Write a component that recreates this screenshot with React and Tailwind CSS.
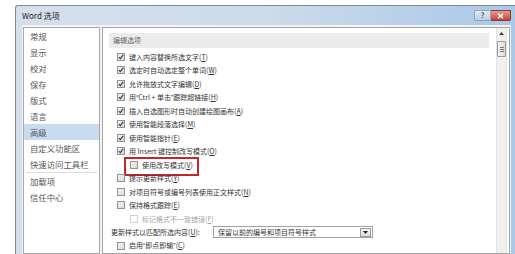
import React from "react";

const FONT = { fontFamily: '"Noto Sans CJK SC", "Noto Sans", sans-serif' };

const NAV = [
  "常规",
  "显示",
  "校对",
  "保存",
  "版式",
  "语言",
  "高级",
  "自定义功能区",
  "快速访问工具栏",
  "加载项",
  "信任中心",
];

// quotes set in a Latin face so they stay narrow like in the dialog
const Q = ({ children }) => <span style={{ fontFamily: '"Liberation Sans", sans-serif' }}>{children}</span>;

const ROWS = [
  { text: "键入内容替换所选文字", key: "T", checked: true },
  { text: "选定时自动选定整个单词", key: "W", checked: true },
  { text: "允许拖放式文字编辑", key: "D", checked: true },
  {
    text: (
      <>
        用<Q>“</Q>Ctrl + 单击<Q>”</Q>跟踪超链接
      </>
    ),
    key: "H",
    checked: true,
  },
  { text: "插入自选图形时自动创建绘图画布", key: "A", checked: true },
  { text: "使用智能段落选择", key: "M", checked: true },
  { text: "使用智能指针", key: "E", checked: true },
  { text: "用 Insert 键控制改写模式", key: "O", checked: true },
  { text: "使用改写模式", key: "V", indent: true, marked: true },
  { text: "提示更新样式", key: "Y" },
  { text: "对项目符号或编号列表使用正文样式", key: "N" },
  { text: "保持格式跟踪", key: "E" },
  { text: "标记格式不一致错误", key: "F", indent: true, disabled: true },
  { select: true },
  {
    text: (
      <>
        启用<Q>“</Q>即点即输<Q>”</Q>
      </>
    ),
    key: "C",
  },
];

function Box({ checked, disabled }) {
  return (
    <span
      className={`flex h-[8px] w-[8px] shrink-0 items-center justify-center border ${
        disabled
          ? "border-[#cfcfcf] bg-white"
          : "border-[#939393] bg-linear-to-br from-[#f4f4f4] to-[#d9d9d9]"
      }`}
    >
      {checked && (
        <svg width="6" height="6" viewBox="0 0 6 6">
          <path d="M0.8 3.1 L2.3 4.7 L5.2 0.9" fill="none" stroke="#2b3a4a" strokeWidth="1.1" />
        </svg>
      )}
    </span>
  );
}

function Row({ row }) {
  if (row.select) {
    return (
      <div className="flex h-[13.5px] items-center pl-[8px] text-[7px] text-[#333]">
        <span className="w-[102px] whitespace-nowrap">
          更新样式以匹配所选内容(<u>U</u>):
        </span>
        <div className="flex h-[12px] w-[160px] items-center justify-between border border-[#a3a3a3] bg-white pl-[4px] pr-[1px]">
          <span>保留以前的编号和项目符号样式</span>
          <span className="flex h-[9px] w-[11px] items-center justify-center border border-[#9a9a9a] bg-linear-to-b from-[#f6f6f6] to-[#dedede]">
            <svg width="5" height="3" viewBox="0 0 5 3">
              <path d="M0 0 H5 L2.5 3 Z" fill="#222" />
            </svg>
          </span>
        </div>
      </div>
    );
  }
  return (
    <div
      className={`relative flex h-[13.5px] items-center gap-[4px] text-[7px] ${
        row.indent ? "pl-[27px]" : "pl-[14px]"
      } ${row.disabled ? "text-[#a5a5a5]" : "text-[#333]"}`}
    >
      <Box checked={row.checked} disabled={row.disabled} />
      <span className="whitespace-nowrap">
        {row.text}(<u>{row.key}</u>)
      </span>
      {row.marked && (
        <span className="absolute left-[21px] top-[-1px] h-[19px] w-[75px] border-2 border-[#c3272e]" />
      )}
    </div>
  );
}

export default function App() {
  return (
    <div className="h-[254px] w-[515px] overflow-hidden bg-white pl-[15px] pt-[5px]" style={FONT}>
      <div className="flex h-full flex-col rounded-tl-[3px] border-l border-t border-[#7d8a99] bg-linear-to-r from-[#d6e0ec] via-[#cddbea] to-[#aac8e8] pl-[6px] pr-[4px]">
        {/* title bar */}
        <div className="flex h-[19px] shrink-0 items-center justify-between">
          <span className="text-[8px] text-[#1e1e1e]">Word 选项</span>
          <div className="flex self-start pt-[4px]">
            <span className="flex h-[11px] w-[17px] items-center justify-center rounded-bl-[2px] border border-[#8ea4be] bg-linear-to-b from-[#e3ecf6] to-[#bccde2] text-[7px] font-bold leading-none text-[#3a4a5e]">
              ?
            </span>
            <span className="flex h-[11px] w-[20px] items-center justify-center rounded-br-[2px] border border-l-0 border-[#8a3a33] bg-linear-to-b from-[#e59a8f] to-[#c4443a]">
              <svg width="7" height="6" viewBox="0 0 7 6">
                <path d="M1 0.8 L6 5.2 M6 0.8 L1 5.2" stroke="#fff" strokeWidth="1.5" />
              </svg>
            </span>
          </div>
        </div>

        {/* client area */}
        <div className="flex flex-1 gap-[2px] bg-[#f2f4f6] pl-[1px] pr-[1px] pt-[2px]">
          {/* left nav */}
          <div className="w-[77px] shrink-0 border border-[#a8a8a8] bg-white">
            {NAV.map((item) => (
              <React.Fragment key={item}>
                {item === "加载项" && <div className="mx-[2px] h-px bg-[#dcdcdc]" />}
                <div
                  className={`flex h-[16px] items-center pl-[6px] text-[8.4px] text-[#555] ${
                    item === "高级" ? "bg-[#c9dbf1]" : ""
                  }`}
                >
                  {item}
                </div>
              </React.Fragment>
            ))}
          </div>

          {/* content panel */}
          <div className="flex flex-1 border border-[#a3a3a3] bg-white">
            <div className="flex-1 pt-[5px]">
              <div className="ml-[6px] flex h-[15px] w-[380px] items-center bg-[#ececec] pl-[4px] text-[7px] text-[#666]">
                编辑选项
              </div>
              <div className="mt-[2px]">
                {ROWS.map((row, i) => (
                  <Row key={i} row={row} />
                ))}
              </div>
            </div>

            {/* scrollbar */}
            <div className="mr-[2px] flex w-[11px] flex-col items-center border-x border-[#e2e2e2] bg-[#f0f0f0]">
              <svg className="mt-[4px]" width="5" height="3" viewBox="0 0 5 3">
                <path d="M0 3 H5 L2.5 0 Z" fill="#444" />
              </svg>
              <div className="mt-[6px] flex h-[16px] w-[9px] flex-col items-center justify-center gap-[1px] rounded-[1px] border border-[#9b9b9b] bg-linear-to-r from-[#f5f5f5] to-[#dadada]">
                <span className="h-px w-[4px] bg-[#777]" />
                <span className="h-px w-[4px] bg-[#777]" />
                <span className="h-px w-[4px] bg-[#777]" />
              </div>
            </div>
          </div>
        </div>
      </div>
    </div>
  );
}
